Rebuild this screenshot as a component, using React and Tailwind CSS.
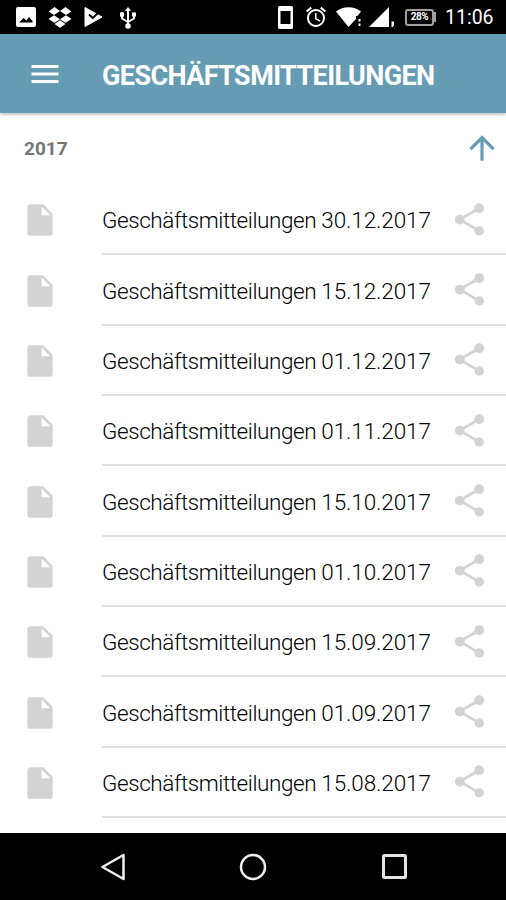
import { MdAlarm, MdArrowUpward, MdInsertDriveFile, MdMenu, MdShare } from 'react-icons/md'

const DATES = [
  '30.12.2017',
  '15.12.2017',
  '01.12.2017',
  '01.11.2017',
  '15.10.2017',
  '01.10.2017',
  '15.09.2017',
  '01.09.2017',
  '15.08.2017',
]

function ImageIcon() {
  return (
    <svg viewBox="0 0 20 20" className="w-5 h-5" fill="currentColor">
      <path fillRule="evenodd" d="M2 0h16a2 2 0 0 1 2 2v16a2 2 0 0 1-2 2H2a2 2 0 0 1-2-2V2a2 2 0 0 1 2-2zm1.500 15.500h13v-1.500L13 10l-2.500 3.500L7.500 11l-4 4z" />
    </svg>
  )
}

function DropboxIcon() {
  return (
    <svg viewBox="0 0 24 21" className="w-6 h-[21px]" fill="currentColor">
      <path d="M6.500 0 12 4 6 8 .5 4.500zM17.500 0 12 4l6 4 5.500-3.500zM.5 12 6 8.300l6 3.900-5.500 3.600zM23.500 12 18 8.300l-6 3.900 5.500 3.600zM6.500 17l5.500-3.700 5.500 3.700-5.500 3.700z" />
    </svg>
  )
}

function PlayCheckIcon() {
  return (
    <svg viewBox="0 0 19 20" className="w-[19px] h-5">
      <path d="M1 .5 18 10 1 19.500z" fill="#fff" stroke="#fff" strokeLinejoin="round" />
      <path d="m5 7.500 3.800 3.500L16.500 3.500" fill="none" stroke="#000" strokeWidth="1.800" />
    </svg>
  )
}

function UsbIcon() {
  return (
    <svg viewBox="0 0 16 22" className="w-4 h-[22px]" fill="currentColor">
      <path d="M8 0l3 4H5zM0 5.500h4v4H0zM12 5.500h4v4h-4z" />
      <circle cx="2" cy="7.500" r="2.200" />
      <circle cx="8" cy="19" r="2.800" />
      <path d="M8 3v16M2 8v3.500L8 15M14 8v3.500L8 15" fill="none" stroke="currentColor" strokeWidth="2" />
    </svg>
  )
}

function PhoneIcon() {
  return (
    <svg viewBox="0 0 15 23" className="w-[15px] h-[23px]" fill="currentColor">
      <path fillRule="evenodd" d="M1.500 0h12A1.500 1.500 0 0 1 15 1.500v20a1.500 1.500 0 0 1-1.500 1.500h-12A1.500 1.500 0 0 1 0 21.500v-20A1.500 1.500 0 0 1 1.500 0zM2.500 5v13h10V5z" />
    </svg>
  )
}

function WifiIcon() {
  return (
    <svg viewBox="0 0 26 20" className="w-[26px] h-5" fill="currentColor">
      <path d="M0 4.500C7-1.300 18-1.300 25 4.500L21.500 9H20v3l-7.500 8z" />
      <path d="M22.500 12h2v2.500h-2zM22.500 16.500h2V19h-2z" />
    </svg>
  )
}

function SignalIcon() {
  return (
    <svg viewBox="0 0 26 20" className="w-[26px] h-5" fill="currentColor">
      <path d="M20 0v20H0zM22.500 14.500H25v3.500l-1 2h-1.500z" />
    </svg>
  )
}

function Battery() {
  return (
    <div className="flex items-center">
      <div className="flex items-center justify-center w-[29px] h-[17px] rounded-[3px] border-2 border-[#a0a0a0]">
        <span className="text-[10px] leading-none font-bold tracking-[-0.5px] text-white">28%</span>
      </div>
      <div className="w-0.5 h-2.5 bg-[#a0a0a0]" />
    </div>
  )
}

function StatusBar() {
  return (
    <div className="flex items-center h-[34px] pl-4 bg-black text-white">
      <ImageIcon />
      <span className="ml-3"><DropboxIcon /></span>
      <span className="ml-3"><PlayCheckIcon /></span>
      <span className="ml-[17px] pt-0.5"><UsbIcon /></span>
      <div className="flex items-center ml-auto pr-[10px]">
        <PhoneIcon />
        <MdAlarm size={24} className="ml-[11px]" />
        <span className="ml-[8px]"><WifiIcon /></span>
        <span className="ml-[7px]"><SignalIcon /></span>
        <span className="ml-[10px]"><Battery /></span>
        <span className="ml-[9px] w-[51px] pt-0.5 text-[19.500px] leading-none whitespace-nowrap">11:06</span>
      </div>
    </div>
  )
}

function Row({ date }) {
  return (
    <li className="flex h-[70.35px]">
      <div className="flex items-center w-[102px] pl-[21px]">
        <MdInsertDriveFile size={38} className="text-[#d3d3d3]" />
      </div>
      <div className="flex flex-1 items-center justify-between pr-[17px] border-b-2 border-[#e0e0e0]">
        <span className="pt-1 text-[22.500px] font-light whitespace-nowrap text-black">
          <span className="tracking-[-0.42px]">Geschäftsmitteilungen </span>
          <span className="tracking-[-0.1px]">{date}</span>
        </span>
        <MdShare size={39} className="shrink-0 text-[#d3d3d3]" />
      </div>
    </li>
  )
}

function NavBar() {
  return (
    <div className="flex items-center h-[67px] pl-[100px] bg-black">
      <svg viewBox="0 0 26 28" className="w-[26px] h-7" fill="none" stroke="#eee" strokeWidth="2.500" strokeLinejoin="round">
        <path d="M23.500 2v24L2.500 14z" />
      </svg>
      <svg viewBox="0 0 28 28" className="w-7 h-7 ml-[113px]" fill="none" stroke="#eee" strokeWidth="2.500">
        <circle cx="14" cy="14" r="12" />
      </svg>
      <svg viewBox="0 0 25 25" className="w-[25px] h-[25px] ml-[115px]" fill="none" stroke="#e4e4e4" strokeWidth="3">
        <rect x="1.500" y="1.500" width="22" height="22" rx="1" />
      </svg>
    </div>
  )
}

export default function App() {
  return (
    <div className="flex flex-col w-[506px] h-[900px] overflow-hidden bg-white font-['Roboto',sans-serif]">
      <StatusBar />

      <header className="relative flex items-center h-[79px] pl-[27px] bg-[#659bb3] text-white shadow-[0_1px_4px_rgba(0,0,0,0.35)]">
        <MdMenu size={36} />
        <h1 className="ml-[39px] pt-1.5 text-[27px] font-bold tracking-[-0.6px] whitespace-nowrap">GESCHÄFTSMITTEILUNGEN</h1>
      </header>

      <main className="flex-1 overflow-hidden">
        <div className="flex items-center justify-between h-[72px] pl-6 pr-[5px]">
          <h2 className="text-[19px] font-bold text-[#757575]">2017</h2>
          <MdArrowUpward size={38} className="mb-[3px] text-[#659bb3]" />
        </div>
        <ul>
          {DATES.map(date => <Row key={date} date={date} />)}
        </ul>
      </main>

      <NavBar />
    </div>
  )
}
